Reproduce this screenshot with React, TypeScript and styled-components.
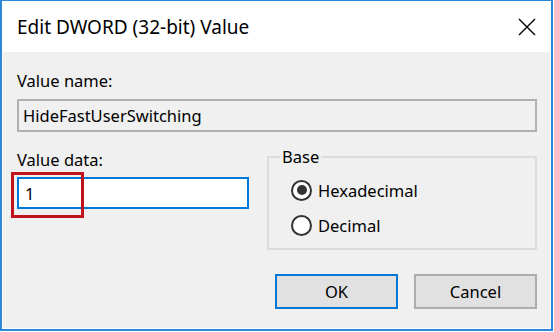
import styled, { createGlobalStyle } from "styled-components";

const GlobalStyle = createGlobalStyle`
    html, body {
        margin: 0;
        padding: 0;
        background: #ffffff;
    }
    body {
        font-family: "Noto Sans", "Liberation Sans", sans-serif;
        color: #000000;
    }
`;

function CloseIcon() {
    return (
        <svg width="18" height="18" viewBox="0 0 18 18">
            <path d="M1 1 L17 17 M17 1 L1 17" stroke="#000" strokeWidth="1.4" fill="none" />
        </svg>
    );
}

interface RadioProps {
    label: string;
    checked: boolean;
}

function Radio({ label, checked }: RadioProps) {
    return (
        <RadioRow>
            <RadioCircle>{checked && <RadioDot />}</RadioCircle>
            <RadioLabel>{label}</RadioLabel>
        </RadioRow>
    );
}

export default function App() {
    return (
        <>
            <GlobalStyle />
            <Window>
                <TitleBar>
                    <Title>Edit DWORD (32-bit) Value</Title>
                    <CloseButton>
                        <CloseIcon />
                    </CloseButton>
                </TitleBar>
                <Body>
                    <Label>Value name:</Label>
                    <ReadOnlyBox>HideFastUserSwitching</ReadOnlyBox>
                    <DataRow>
                        <DataColumn>
                            <Label>Value data:</Label>
                            <DataInput>1</DataInput>
                        </DataColumn>
                        <GroupBox>
                            <Legend>Base</Legend>
                            <Radio label="Hexadecimal" checked />
                            <Radio label="Decimal" checked={false} />
                        </GroupBox>
                    </DataRow>
                    <ButtonRow>
                        <Button $primary>OK</Button>
                        <Button>Cancel</Button>
                    </ButtonRow>
                </Body>
                <Highlight />
            </Window>
        </>
    );
}

const Window = styled.div`
    position: relative;
    box-sizing: border-box;
    width: 553px;
    height: 331px;
    display: flex;
    flex-direction: column;
    border: 2px solid #2b88d8;
    border-top-width: 1px;
    background: #f0f0f0;
`;

const TitleBar = styled.div`
    height: 51px;
    flex-shrink: 0;
    display: flex;
    align-items: center;
    justify-content: space-between;
    padding: 0 15px;
    background: #ffffff;
`;

const Title = styled.div`
    font-size: 19px;
    line-height: 24px;
    color: #000000;
`;

const CloseButton = styled.div`
    width: 18px;
    height: 18px;
    display: flex;
`;

const Body = styled.div`
    flex: 1;
    display: flex;
    flex-direction: column;
    padding: 19px 14px 0 15px;
    box-shadow: inset 1px 0 0 #ffffff, inset -1px 0 0 #ffffff, inset 0 -1px 0 #ffffff;
`;

const Label = styled.div`
    font-size: 16.5px;
    line-height: 20px;
`;

const ReadOnlyBox = styled.div`
    box-sizing: border-box;
    height: 33px;
    margin-top: 8px;
    display: flex;
    align-items: center;
    padding-left: 4px;
    border: 2px solid #b0b0b0;
    background: #f0f0f0;
    font-size: 16.5px;
`;

const DataRow = styled.div`
    display: grid;
    grid-template-columns: 250px 270px;
    align-items: start;
    margin-top: 15px;
`;

const DataColumn = styled.div`
    display: flex;
    flex-direction: column;
    padding-top: 3px;
`;

const DataInput = styled.div`
    box-sizing: border-box;
    width: 232px;
    height: 32px;
    margin-top: 7px;
    display: flex;
    align-items: center;
    padding-left: 6px;
    border: 2px solid #0078d7;
    background: #ffffff;
    font-size: 16.5px;
`;

const GroupBox = styled.fieldset`
    box-sizing: border-box;
    margin: 0;
    padding: 11px 0 11px 22px;
    height: 103px;
    border: 2px solid #dcdcdc;
    display: flex;
    flex-direction: column;
    gap: 11px;
`;

const Legend = styled.legend`
    margin-left: -11px;
    padding: 0 2px;
    font-size: 16.5px;
    line-height: 20px;
`;

const RadioRow = styled.div`
    display: flex;
    align-items: center;
    height: 24px;
    gap: 6px;
`;

const RadioCircle = styled.div`
    box-sizing: border-box;
    width: 21px;
    height: 21px;
    border-radius: 50%;
    border: 2px solid #333333;
    background: #ffffff;
    display: flex;
    align-items: center;
    justify-content: center;
`;

const RadioDot = styled.div`
    width: 10px;
    height: 10px;
    border-radius: 50%;
    background: #333333;
`;

const RadioLabel = styled.span`
    font-size: 16.5px;
`;

const ButtonRow = styled.div`
    display: flex;
    justify-content: flex-end;
    gap: 16px;
    margin-top: 24px;
`;

const Button = styled.div<{ $primary?: boolean }>`
    box-sizing: border-box;
    width: 123px;
    height: 35px;
    display: flex;
    align-items: center;
    justify-content: center;
    background: #e1e1e1;
    border: 2px solid ${({ $primary }) => ($primary ? "#0078d7" : "#adadad")};
    font-size: 16.5px;
`;

const Highlight = styled.div`
    position: absolute;
    left: 9px;
    top: 171px;
    width: 73px;
    height: 46px;
    box-sizing: border-box;
    border: 3px solid #c0141c;
`;
